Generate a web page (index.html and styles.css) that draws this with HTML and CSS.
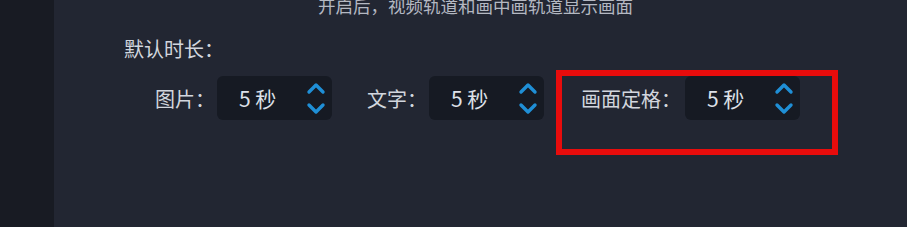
FILE: index.html
```html
<!DOCTYPE html>
<html lang="zh-CN">
<head>
  <meta charset="UTF-8">
  <title>时长设置</title>
  <link rel="stylesheet" href="styles.css">
</head>
<body>
  <div class="layout">
    <div class="sidebar"></div>
    <div class="main">
      <div class="hint">开启后，视频轨道和画中画轨道显示画面</div>
      <div class="section-title">默认时长：</div>
      <div class="row">
        <div class="field">
          <span class="field-label">图片：</span>
          <div class="spin">
            <span class="spin-value">5 秒</span>
            <svg class="spin-arrows" width="20" height="36" viewBox="0 0 20 36"><path d="M3 12 L10 5 L17 12" fill="none" stroke="#1f8fd6" stroke-width="3.4" stroke-linecap="round" stroke-linejoin="round"/><path d="M3 25 L10 32 L17 25" fill="none" stroke="#1f8fd6" stroke-width="3.4" stroke-linecap="round" stroke-linejoin="round"/></svg>
          </div>
        </div>
        <div class="field">
          <span class="field-label">文字：</span>
          <div class="spin">
            <span class="spin-value">5 秒</span>
            <svg class="spin-arrows" width="20" height="36" viewBox="0 0 20 36"><path d="M3 12 L10 5 L17 12" fill="none" stroke="#1f8fd6" stroke-width="3.4" stroke-linecap="round" stroke-linejoin="round"/><path d="M3 25 L10 32 L17 25" fill="none" stroke="#1f8fd6" stroke-width="3.4" stroke-linecap="round" stroke-linejoin="round"/></svg>
          </div>
        </div>
        <div class="field field-marked">
          <span class="field-label">画面定格：</span>
          <div class="spin">
            <span class="spin-value">5 秒</span>
            <svg class="spin-arrows" width="20" height="36" viewBox="0 0 20 36"><path d="M3 12 L10 5 L17 12" fill="none" stroke="#1f8fd6" stroke-width="3.4" stroke-linecap="round" stroke-linejoin="round"/><path d="M3 25 L10 32 L17 25" fill="none" stroke="#1f8fd6" stroke-width="3.4" stroke-linecap="round" stroke-linejoin="round"/></svg>
          </div>
        </div>
      </div>
    </div>
  </div>
</body>
</html>
```

FILE: styles.css
```css
html, body {
  margin: 0;
  padding: 0;
  background-color: #222632;
  font-family: "Noto Sans CJK SC", "Noto Sans", sans-serif;
  color: #d2d6de;
}

.layout {
  display: flex;
  height: 227px;
  overflow: hidden;
}

.sidebar {
  width: 54px;
  flex-shrink: 0;
  background-color: #181b23;
}

.main {
  flex: 1;
  background-color: #222632;
}

.hint {
  font-size: 17.5px;
  line-height: 20px;
  margin-top: -4px;
  padding-left: 264px;
  color: #b4b8c2;
}

.section-title {
  font-size: 20px;
  line-height: 26px;
  margin-top: 20px;
  padding-left: 70px;
}

.row {
  display: flex;
  align-items: flex-start;
  margin-top: 14px;
  padding-left: 101px;
}

.field {
  display: flex;
  align-items: center;
}

.field + .field {
  margin-left: 35px;
}

.field-label {
  font-size: 20px;
  margin-right: 2px;
}

.spin {
  width: 115px;
  height: 44px;
  box-sizing: border-box;
  background-color: #161a23;
  border-radius: 6px;
  display: flex;
  align-items: center;
  justify-content: space-between;
  padding: 0 6px 0 22px;
}

.spin-value {
  font-size: 21px;
  color: #dde1e8;
}

.field-marked {
  margin-top: -6px;
  margin-left: 12px !important;
  border: 6px solid #e80c0c;
  padding: 0 32px 29px 19px;
}

.field-marked .field-label {
  margin-right: 4px;
}
```
